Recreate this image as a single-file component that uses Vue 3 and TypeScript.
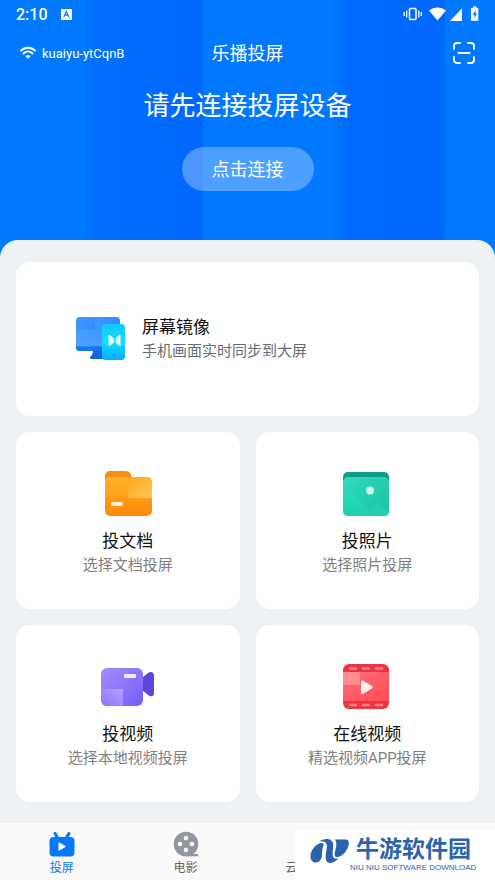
<script setup lang="ts">
import { ref } from 'vue'

interface CastOption {
  id: 'doc' | 'photo' | 'video' | 'online'
  title: string
  note: string
}

const network = 'kuaiyu-ytCqnB'
const options: CastOption[] = [
  { id: 'doc', title: '投文档', note: '选择文档投屏' },
  { id: 'photo', title: '投照片', note: '选择照片投屏' },
  { id: 'video', title: '投视频', note: '选择本地视频投屏' },
  { id: 'online', title: '在线视频', note: '精选视频APP投屏' },
]
const activeTab = ref('cast')
</script>

<template>
  <div class="app">
    <header class="hero">
      <div class="status">
        <div class="status-side">
          <span class="clock">2:10</span>
          <svg class="badge-a" viewBox="0 0 11 11" aria-hidden="true">
            <rect width="11" height="11" rx="1" fill="#fff" />
            <path d="M2.8 8 5.3 2.500 7.800 8M3.800 6.200h3" fill="none" stroke="#1672e8" stroke-width="1.2" />
            <circle cx="8.3" cy="9" r=".6" fill="#1672e8" />
          </svg>
        </div>
        <svg class="status-icons" viewBox="0 0 76 16" aria-hidden="true" fill="#fff">
          <rect x="6.500" y="2.500" width="6.500" height="11" rx="1" fill="none" stroke="#fff" stroke-width="1.500" />
          <path d="M1.200 6v4M3.700 4.500v7M15.800 4.500v7M18.300 6v4" stroke="#fff" stroke-width="1.300" />
          <path d="M26 4.400c5-4 12-4 17 0L34.500 14.500z" />
          <path d="M59 2.500V15H47z" />
          <path d="M68 2h2V.6h3.600V2h1.700v12.800H68z" />
          <path d="m72.500 4-2.800 4.800h1.700v3.500L74 7.500h-1.500z" fill="#0874f5" />
        </svg>
      </div>
      <div class="titlebar">
        <div class="network">
          <svg class="wifi" viewBox="0 0 16 14" aria-hidden="true">
            <path d="M1 4.700c4-4 10-4 14 0M3.500 7.500c2.700-2.600 6.300-2.600 9 0" fill="none" stroke="#fff" stroke-width="1.900" stroke-linecap="round" />
            <path d="M5.400 10c1.500-1.300 3.700-1.300 5.200 0L8 12.800z" fill="#fff" />
          </svg>
          <span>{{ network }}</span>
        </div>
        <h1>乐播投屏</h1>
        <button class="scan" type="button" aria-label="扫一扫">
          <svg viewBox="0 0 22 22" aria-hidden="true">
            <path d="M1 7V4a3 3 0 0 1 3-3h3M15 1h3a3 3 0 0 1 3 3v3M21 15v3a3 3 0 0 1-3 3h-3M7 21H4a3 3 0 0 1-3-3v-3M5.500 11h11" fill="none" stroke="#fff" stroke-width="1.800" stroke-linecap="round" />
          </svg>
        </button>
      </div>
      <p class="prompt">请先连接投屏设备</p>
      <button class="connect" type="button">点击连接</button>
    </header>

    <main class="panel">
      <button class="card mirror" type="button">
        <svg class="mirror-icon" viewBox="0 0 50 46" aria-hidden="true">
          <defs>
            <linearGradient id="screen" x1="0" y1="0" x2="1" y2="1">
              <stop offset="0" stop-color="#3d9bff" /><stop offset="1" stop-color="#1f73f5" />
            </linearGradient>
            <linearGradient id="screenShade" x1="0" y1="0" x2="0" y2="1">
              <stop offset="0" stop-color="#55b4ff" stop-opacity=".2" /><stop offset="1" stop-color="#62baff" />
            </linearGradient>
            <linearGradient id="phone" x1="0" y1="0" x2="0" y2="1">
              <stop offset="0" stop-color="#12c9ff" /><stop offset=".5" stop-color="#16dcfb" /><stop offset="1" stop-color="#08adff" />
            </linearGradient>
          </defs>
          <path d="M17 34h12v9H16c-2 0-3-2-1-3 1.500-1 2-3 2-6z" fill="#1262e6" />
          <rect y="1" width="44" height="34" rx="4" fill="url(#screen)" />
          <path d="M0 13h19V1h25v21H26v8H0z" fill="url(#screenShade)" opacity=".55" />
          <path d="M0 31h27v4H4a4 4 0 0 1-4-4z" fill="#1772ee" />
          <rect x="26" y="8" width="23" height="36" rx="4" fill="url(#phone)" />
          <path d="m33 19 4.500 3.500v4L33 30zM44 19l-4 3.500v4l4 3.500z" fill="#e8ffff" stroke="#e8ffff" stroke-linejoin="round" />
          <circle cx="38" cy="39.500" r="1.300" fill="#0796ef" />
        </svg>
        <span class="mirror-text">
          <span class="card-title">屏幕镜像</span>
          <span class="card-note mirror-note">手机画面实时同步到大屏</span>
        </span>
      </button>

      <button v-for="option in options" :key="option.id" class="card option" type="button">
        <svg v-if="option.id === 'doc'" class="option-icon" viewBox="0 0 54 54" aria-hidden="true">
          <defs>
            <linearGradient id="folder" x1="0" y1="0" x2="0" y2="1">
              <stop offset="0" stop-color="#ffb62a" /><stop offset="1" stop-color="#ff8606" />
            </linearGradient>
            <linearGradient id="folderShade" x1="0" y1="0" x2="1" y2="1">
              <stop offset="0" stop-color="#ffa51b" /><stop offset="1" stop-color="#ffc95c" />
            </linearGradient>
          </defs>
          <path d="M4 9a5 5 0 0 1 5-5h16c3 0 5 3 6 6v12H4z" fill="#fb8d14" />
          <path d="M4 15a5 5 0 0 1 5-5h37a5 5 0 0 1 5 5v29a5 5 0 0 1-5 5H9a5 5 0 0 1-5-5z" fill="url(#folder)" />
          <path d="M27 10h19a5 5 0 0 1 5 5v16H27z" fill="url(#folderShade)" />
          <rect x="10" y="35" width="12" height="4" rx="2" fill="#fff0d5" />
        </svg>
        <svg v-else-if="option.id === 'photo'" class="option-icon" viewBox="0 0 54 54" aria-hidden="true">
          <defs>
            <linearGradient id="photo" x1="0" y1="0" x2="1" y2="1">
              <stop offset="0" stop-color="#34dbbc" /><stop offset="1" stop-color="#16c2a2" />
            </linearGradient>
            <linearGradient id="hill" x1="0" y1="0" x2="0" y2="1">
              <stop offset="0" stop-color="#22e0b5" /><stop offset="1" stop-color="#1fcfaa" />
            </linearGradient>
          </defs>
          <rect x="3" y="5" width="46" height="38" rx="5" fill="#0b9f88" />
          <rect x="3" y="10" width="46" height="39" rx="5" fill="url(#photo)" />
          <path d="M3 32c3-4 6-7 10-4l22 21H8a5 5 0 0 1-5-5z" fill="url(#hill)" />
          <path d="m29 43 6-6c3-2 5-1 7 1l7 7a5 5 0 0 1-5 4h-9z" fill="#25d0ac" />
          <circle cx="30" cy="23.500" r="4" fill="#c6ffe1" />
        </svg>
        <svg v-else-if="option.id === 'video'" class="option-icon" viewBox="0 0 54 54" aria-hidden="true">
          <defs>
            <linearGradient id="camera" x1="0" y1="0" x2="1" y2="1">
              <stop offset="0" stop-color="#a48dff" /><stop offset="1" stop-color="#765cf7" />
            </linearGradient>
            <linearGradient id="cameraShade" x1="0" y1="1" x2="1" y2="0">
              <stop offset="0" stop-color="#8c72fb" /><stop offset="1" stop-color="#b5a2ff" />
            </linearGradient>
          </defs>
          <path d="m41 18 6-5c3-2 6-1 6 3v17c0 4-3 4-6 2l-6-5z" fill="#6046d8" />
          <rect x="0" y="8" width="42" height="38" rx="6" fill="url(#camera)" />
          <path d="M0 29h22v17H6a6 6 0 0 1-6-6z" fill="url(#cameraShade)" />
          <rect x="23" y="14" width="12" height="4" rx="1" fill="#f0ebff" />
        </svg>
        <svg v-else class="option-icon" viewBox="0 0 54 54" aria-hidden="true">
          <defs>
            <linearGradient id="film" x1="0" y1="0" x2="1" y2="1">
              <stop offset="0" stop-color="#ff6f77" /><stop offset="1" stop-color="#ff4a57" />
            </linearGradient>
          </defs>
          <rect x="3" y="4" width="46" height="45" rx="6" fill="#ed3444" />
          <path d="M3 12h46v29H3z" fill="url(#film)" />
          <path d="M3 12h17v13H3z" fill="#ff9799" opacity=".8" />
          <path d="M10 8.500h6M23 8.500h6M36 8.500h6M10 45h6M23 45h6M36 45h6" stroke="#ff8287" stroke-width="2.400" stroke-linecap="round" />
          <path d="M21 22v10.500c0 1.500 1 2 2.300 1.300l8.500-5.300c1-.7 1-1.700 0-2.400l-8.500-5.400c-1.300-.7-2.300-.2-2.300 1.300z" fill="#fff3f2" />
        </svg>
        <span class="card-title">{{ option.title }}</span>
        <span class="card-note">{{ option.note }}</span>
      </button>
    </main>

    <nav class="tabs">
      <button class="tab" :class="{ active: activeTab === 'cast' }" type="button" @click="activeTab = 'cast'">
        <svg viewBox="0 0 26 26" aria-hidden="true">
          <path d="m6 2.500 3 5M20 2.500l-3 5" stroke="currentColor" stroke-width="3.200" stroke-linecap="round" />
          <rect x=".5" y="6" width="25" height="19.500" rx="4" fill="currentColor" />
          <path d="M9.500 12.500v6c0 1 .6 1.300 1.400.8l5-3c.8-.5.8-1.100 0-1.600l-5-3c-.8-.5-1.400-.2-1.400.8z" fill="#fff" />
        </svg>
        <span>投屏</span>
      </button>
      <button class="tab" :class="{ active: activeTab === 'movie' }" type="button" @click="activeTab = 'movie'">
        <svg viewBox="0 0 26 26" aria-hidden="true" class="reel">
          <circle cx="13" cy="13" r="12.300" />
          <path d="M13 23h12v2.300H13z" />
          <g fill="#fafafa">
            <circle cx="13" cy="7" r="2.300" /><circle cx="7" cy="13" r="2.300" />
            <circle cx="19" cy="13" r="2.300" /><circle cx="13" cy="19" r="2.300" />
          </g>
        </svg>
        <span>电影</span>
      </button>
      <button class="tab cloud" :class="{ active: activeTab === 'cloud' }" type="button" @click="activeTab = 'cloud'">
        <span>云</span>
      </button>
    </nav>

    <aside class="sponsor">
      <svg class="sponsor-mark" viewBox="0 0 40 26" aria-hidden="true" fill="#2a63ad">
        <path d="M10.500 5C4 7 0 14 .5 19.500 1 24.500 6 26 9.500 23c4-3.500 1.500-9.500 4-15.500.7-1.800-.8-3-3-2.500z" />
        <path d="M9 3.500C14 0 22 0 23 5.500c.8 4.500-1.500 11 .5 14 1 1.500 3 1.500 5 .5-3 5-11 7-12.500 2-1.500-5.500 2-12 .5-16C15.500 3.500 12.500 2.800 9 3.500z" />
        <path d="M25 1.500h11c2.500 0 3.500 2.500 2.500 6C37 13 33 18 28 19c-3 .5-4-2-3-5 1-3.500 2.500-9 0-12.500z" />
      </svg>
      <div class="sponsor-text">
        <strong>牛游软件园</strong>
        <small>NIU NIU SOFTWARE DOWNLOAD</small>
      </div>
    </aside>
  </div>
</template>

<style>
body {
  margin: 0;
}
</style>

<style scoped>
.app {
  position: relative;
  display: flex;
  flex-direction: column;
  min-height: 100vh;
  background: #edf1f4;
  font-family: Roboto, "Noto Sans CJK SC", sans-serif;
}
button {
  margin: 0;
  padding: 0;
  border: 0;
  background: none;
  font: inherit;
  color: inherit;
  cursor: pointer;
}
svg {
  display: block;
  flex: none;
}
.hero {
  display: flex;
  flex-direction: column;
  align-items: center;
  height: 258px;
  margin-bottom: -18px;
  color: #fff;
  background: linear-gradient(90deg, #0079ff 0 16%, #006eff 20%, #0068ff 41%, #0078ff 41% 67%, #006aff 71%, #0067ff 90%, #0078ff 90%);
}
.status {
  display: flex;
  align-items: center;
  justify-content: space-between;
  box-sizing: border-box;
  width: 100%;
  height: 28px;
  padding: 0 16px;
}
.status-side {
  display: flex;
  align-items: center;
  gap: 13px;
}
.clock {
  font-size: 16px;
  font-weight: 500;
}
.badge-a {
  width: 11px;
  height: 11px;
}
.status-icons {
  width: 76px;
  height: 16px;
}
.titlebar {
  display: grid;
  grid-template-columns: 1fr auto 1fr;
  align-items: center;
  box-sizing: border-box;
  width: 100%;
  height: 50px;
  padding: 0 20px;
}
.network {
  display: flex;
  align-items: center;
  gap: 6px;
  font-size: 13px;
}
.wifi {
  width: 16px;
  height: 14px;
}
h1 {
  margin: 0;
  padding-top: 2px;
  font-size: 18px;
  font-weight: 400;
  line-height: 26px;
}
.scan {
  justify-self: end;
}
.scan svg {
  width: 22px;
  height: 22px;
}
.prompt {
  margin: 8px 0 0;
  font-size: 26px;
  line-height: 40px;
}
.connect {
  width: 132px;
  height: 44px;
  margin-top: 21px;
  padding-bottom: 2px;
  border-radius: 22px;
  background: rgba(255, 255, 255, 0.3);
  font-size: 18px;
}
.panel {
  display: grid;
  grid-template-columns: 1fr 1fr;
  grid-template-rows: 154px;
  grid-auto-rows: 177px;
  gap: 16px;
  flex: 1;
  padding: 22px 16px 21px;
  border-radius: 18px 18px 0 0;
  background: #edf1f4;
}
.card {
  display: flex;
  border-radius: 14px;
  background: #fff;
}
.mirror {
  grid-column: 1 / -1;
  align-items: center;
  gap: 16px;
  padding-left: 60px;
  text-align: left;
}
.mirror-icon {
  width: 50px;
  height: 46px;
}
.mirror-text {
  display: flex;
  flex-direction: column;
}
.option {
  flex-direction: column;
  align-items: center;
  padding-top: 35px;
}
.option-icon {
  width: 54px;
  height: 54px;
  margin-bottom: 8px;
}
.card-title {
  color: #111;
  font-size: 17px;
  line-height: 24px;
}
.card-note {
  color: #808080;
  font-size: 15px;
  line-height: 24px;
}
.mirror-note {
  color: #666d75;
}
.tabs {
  display: grid;
  grid-template-columns: repeat(4, 1fr);
  height: 57px;
  background: #fafafa;
}
.tab {
  display: flex;
  flex-direction: column;
  align-items: center;
  justify-content: flex-end;
  gap: 2px;
  padding-bottom: 3px;
  color: #666;
  font-size: 12px;
  line-height: 18px;
}
.tab svg {
  width: 26px;
  height: 26px;
}
.tab.active {
  color: #0a78f5;
}
.reel {
  fill: #92979f;
}
.cloud span {
  width: 48px;
  text-align: left;
}
.sponsor {
  position: absolute;
  right: 0;
  bottom: 0;
  display: flex;
  box-sizing: border-box;
  width: 200px;
  height: 50px;
  padding: 8px 0 0 15px;
  background: #fff;
  color: #2a63ad;
}
.sponsor-mark {
  width: 40px;
  height: 26px;
}
.sponsor-text {
  display: flex;
  flex-direction: column;
  gap: 1px;
}
.sponsor-text strong {
  padding-left: 6px;
  font-size: 23px;
  font-weight: 700;
  line-height: 23px;
}
.sponsor-text small {
  font-family: "Liberation Sans", Arial, sans-serif;
  font-size: 8px;
  line-height: 12px;
  white-space: nowrap;
}
</style>
